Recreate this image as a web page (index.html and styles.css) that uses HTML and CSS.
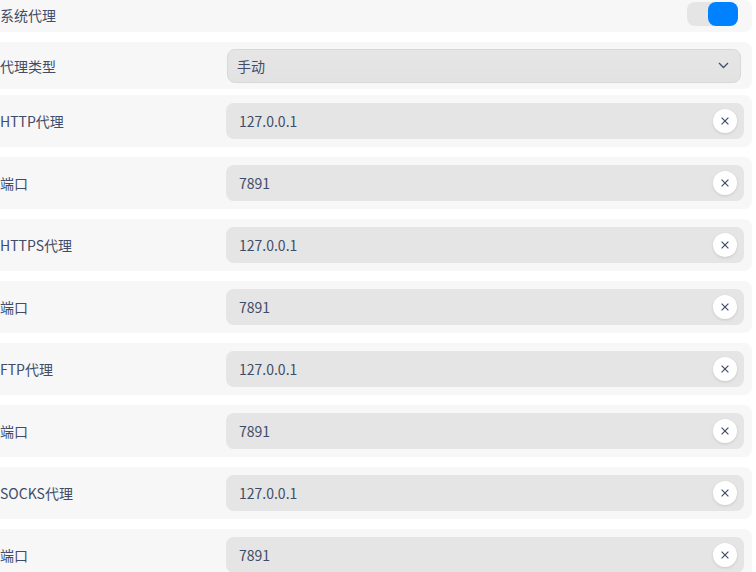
FILE: index.html
```html
<!DOCTYPE html>
<html lang="zh">
<head>
<meta charset="utf-8">
<link rel="stylesheet" href="styles.css">
</head>
<body>
<div class="page">
  <div class="row row-switch">
    <span class="label">系统代理</span>
    <div class="toggle"><div class="knob"></div></div>
  </div>
  <div class="row row-select">
    <span class="label">代理类型</span>
    <div class="select">
      <span>手动</span>
      <svg class="chev" width="11" height="7" viewBox="0 0 11 7"><path d="M1 1 L5.5 5.5 L10 1" fill="none" stroke="#414d68" stroke-width="1.3"/></svg>
    </div>
  </div>
  <div class="row row-field first">
    <span class="label">HTTP代理</span>
    <div class="input"><span>127.0.0.1</span><span class="clear"><svg width="10" height="10" viewBox="0 0 10 10"><path d="M1.6 1.6 L8.4 8.4 M8.4 1.6 L1.6 8.4" stroke="#414d68" stroke-width="1.2"/></svg></span></div>
  </div>
  <div class="row row-field">
    <span class="label">端口</span>
    <div class="input"><span>7891</span><span class="clear"><svg width="10" height="10" viewBox="0 0 10 10"><path d="M1.6 1.6 L8.4 8.4 M8.4 1.6 L1.6 8.4" stroke="#414d68" stroke-width="1.2"/></svg></span></div>
  </div>
  <div class="row row-field">
    <span class="label">HTTPS代理</span>
    <div class="input"><span>127.0.0.1</span><span class="clear"><svg width="10" height="10" viewBox="0 0 10 10"><path d="M1.6 1.6 L8.4 8.4 M8.4 1.6 L1.6 8.4" stroke="#414d68" stroke-width="1.2"/></svg></span></div>
  </div>
  <div class="row row-field">
    <span class="label">端口</span>
    <div class="input"><span>7891</span><span class="clear"><svg width="10" height="10" viewBox="0 0 10 10"><path d="M1.6 1.6 L8.4 8.4 M8.4 1.6 L1.6 8.4" stroke="#414d68" stroke-width="1.2"/></svg></span></div>
  </div>
  <div class="row row-field">
    <span class="label">FTP代理</span>
    <div class="input"><span>127.0.0.1</span><span class="clear"><svg width="10" height="10" viewBox="0 0 10 10"><path d="M1.6 1.6 L8.4 8.4 M8.4 1.6 L1.6 8.4" stroke="#414d68" stroke-width="1.2"/></svg></span></div>
  </div>
  <div class="row row-field">
    <span class="label">端口</span>
    <div class="input"><span>7891</span><span class="clear"><svg width="10" height="10" viewBox="0 0 10 10"><path d="M1.6 1.6 L8.4 8.4 M8.4 1.6 L1.6 8.4" stroke="#414d68" stroke-width="1.2"/></svg></span></div>
  </div>
  <div class="row row-field">
    <span class="label">SOCKS代理</span>
    <div class="input"><span>127.0.0.1</span><span class="clear"><svg width="10" height="10" viewBox="0 0 10 10"><path d="M1.6 1.6 L8.4 8.4 M8.4 1.6 L1.6 8.4" stroke="#414d68" stroke-width="1.2"/></svg></span></div>
  </div>
  <div class="row row-field">
    <span class="label">端口</span>
    <div class="input"><span>7891</span><span class="clear"><svg width="10" height="10" viewBox="0 0 10 10"><path d="M1.6 1.6 L8.4 8.4 M8.4 1.6 L1.6 8.4" stroke="#414d68" stroke-width="1.2"/></svg></span></div>
  </div>
</div>
</body>
</html>
```
FILE: styles.css
```css
html, body {
  margin: 0;
  padding: 0;
  background: #ffffff;
  height: 572px;
  overflow: hidden;
}
body {
  font-family: "Noto Sans CJK SC", "Noto Sans", sans-serif;
  font-size: 14px;
  color: #414d68;
}
.page {
  width: 752px;
  display: flex;
  flex-direction: column;
}
.row {
  background: #f7f7f7;
  border-radius: 0 8px 8px 0;
  display: grid;
  grid-template-columns: 226px 1fr;
  align-items: center;
  box-sizing: border-box;
}
.label {
  line-height: 20px;
}
.row-switch {
  height: 32px;
  align-items: start;
  grid-template-columns: 1fr auto;
  padding-right: 14px;
}
.row-switch .label {
  padding-top: 5px;
}
.toggle {
  margin-top: 2px;
  width: 51px;
  height: 24px;
  background: #e5e5e5;
  border-radius: 8px;
  display: flex;
  justify-content: flex-end;
}
.knob {
  width: 30px;
  height: 24px;
  background: #0081ff;
  border-radius: 8px;
}
.row-select {
  margin-top: 10px;
  height: 47px;
  padding-right: 11px;
}
.select {
  margin-left: 1px;
  height: 34px;
  box-sizing: border-box;
  border: 1px solid #d8d8d8;
  border-radius: 8px;
  background: linear-gradient(#e6e6e6, #e2e2e2);
  display: flex;
  align-items: center;
  justify-content: space-between;
  padding: 0 11px 0 9px;
}
.chev {
  display: block;
}
.row-field {
  height: 52px;
  margin-top: 10px;
  padding-right: 8px;
}
.row-field.first {
  margin-top: 6px;
}
.input {
  height: 36px;
  background: #e5e5e5;
  border-radius: 8px;
  display: flex;
  align-items: center;
  justify-content: space-between;
  padding: 0 7px 0 13px;
}
.clear {
  width: 24px;
  height: 24px;
  border-radius: 50%;
  background: #ffffff;
  box-shadow: 0 1px 3px rgba(0, 0, 0, 0.12);
  display: flex;
  align-items: center;
  justify-content: center;
}
.clear svg {
  display: block;
}
```
